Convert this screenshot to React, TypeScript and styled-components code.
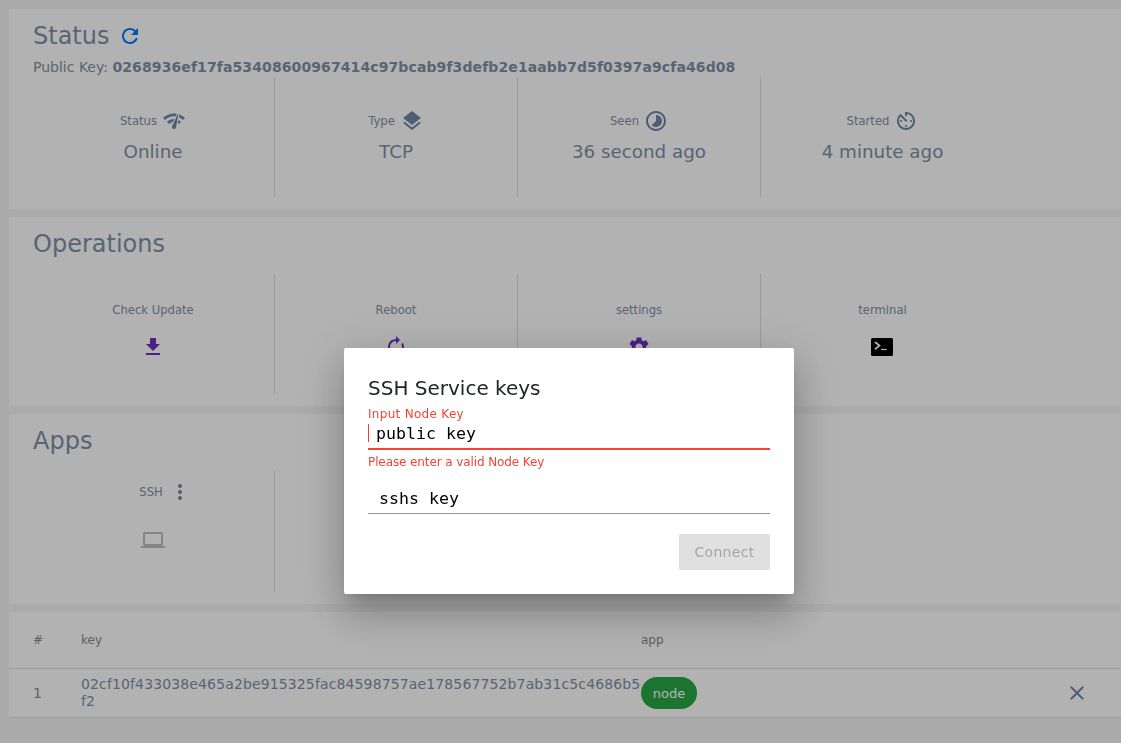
import React from 'react';
import styled, { createGlobalStyle } from 'styled-components';

const GlobalStyle = createGlobalStyle`
  html, body {
    margin: 0;
    padding: 0;
    height: 100%;
    overflow: hidden;
    background: #f5f5f5;
    font-family: "DejaVu Sans", sans-serif;
    color: #8090a6;
  }
  * {
    box-sizing: border-box;
  }
`;

const Page = styled.div`
  display: flex;
  flex-direction: column;
  gap: 8px;
  padding: 9px 0 0 9px;
`;
const Panel = styled.section`
  background: #fff;
  padding: 12px 0 12px 23px;
`;
const Title = styled.h2<{ $tight?: boolean }>`
  display: flex;
  align-items: center;
  gap: 9px;
  margin: 0 0 ${({ $tight }) => ($tight ? '8px' : '16px')} 1px;
  padding-top: 2px;
  height: 29px;
  font-size: 24px;
  line-height: 27px;
  font-weight: 400;
  svg {
    margin-top: -2px;
  }
`;
const KeyLine = styled.div`
  margin-left: 1px;
  height: 19px;
  font-size: 14px;
  line-height: 19px;
  b {
    font-weight: 700;
    letter-spacing: 0.1px;
  }
`;
const CellRow = styled.div`
  display: grid;
  grid-template-columns: repeat(4, 243px);
`;
const Cell = styled.div<{ $top: number; $gap: number; $height: number }>`
  display: flex;
  flex-direction: column;
  align-items: center;
  gap: ${({ $gap }) => $gap}px;
  height: ${({ $height }) => $height}px;
  padding-top: ${({ $top }) => $top}px;
  border-right: 1px solid #ddd;
  &:last-child {
    border-right: none;
  }
`;
const Label = styled.div`
  display: flex;
  align-items: center;
  gap: 5px;
  height: 20px;
  font-size: 11.6px;
  line-height: 20px;
`;
const Overhang = styled.span`
  margin-right: -25px;
`;
const Value = styled.div`
  font-size: 18.3px;
  line-height: 24px;
`;
const Icon = styled.svg<{ $color?: string }>`
  display: block;
  flex: none;
  fill: ${({ $color }) => $color || '#7088a8'};
`;
const TerminalIcon = styled.svg`
  display: block;
  margin: 3px 1px 0 0;
`;
const TablePanel = styled.section`
  background: #fff;
  color: #8090a6;
`;
const TableRow = styled.div<{ $height: number }>`
  display: grid;
  grid-template-columns: 48px 560px 1fr 24px;
  align-items: center;
  height: ${({ $height }) => $height}px;
  padding: 0 32px 0 24px;
  border-bottom: 1px solid #dee2e6;
  font-size: 14px;
  line-height: 17px;
`;
const HeadCell = styled.div`
  font-size: 12px;
  color: #8a8a8a;
`;
const KeyCell = styled.div`
  word-break: break-all;
  letter-spacing: 0.13px;
`;
const Chip = styled.span`
  display: inline-flex;
  align-items: center;
  justify-content: center;
  width: 56px;
  height: 32px;
  border-radius: 16px;
  background: #28a745;
  color: #fff;
  font-size: 13px;
`;
const Overlay = styled.div`
  position: fixed;
  inset: 0;
  background: rgba(0, 0, 0, 0.3);
`;
const Dialog = styled.div`
  position: absolute;
  left: 344px;
  top: 348px;
  width: 450px;
  padding: 24px;
  background: #fff;
  border-radius: 2px;
  color: #212529;
  box-shadow: 0 11px 15px -7px rgba(0, 0, 0, 0.2), 0 24px 38px 3px rgba(0, 0, 0, 0.14), 0 9px 46px 8px rgba(0, 0, 0, 0.12);
`;
const DialogTitle = styled.h3`
  margin: 0 0 2px;
  font-size: 20px;
  line-height: 32px;
  font-weight: 400;
`;
const FieldLabel = styled.div`
  font-size: 12px;
  line-height: 16px;
  letter-spacing: 0.3px;
  color: #f44336;
`;
const InputBox = styled.div<{ $error?: boolean }>`
  position: relative;
  display: flex;
  height: ${({ $error }) => ($error ? '28px' : '32px')};
  border-bottom: ${({ $error }) => ($error ? '2px solid #f44336' : '1px solid #949494')};
`;
const Caret = styled.span`
  position: absolute;
  left: 0;
  top: 2px;
  width: 1px;
  height: 18px;
  background: #f44336;
`;
const TextInput = styled.input<{ $indent: number; $top: number; $bottom: number }>`
  flex: 1;
  min-width: 0;
  padding: ${({ $top }) => $top}px 0 ${({ $bottom }) => $bottom}px ${({ $indent }) => $indent}px;
  border: none;
  outline: none;
  background: transparent;
  font-family: "DejaVu Sans Mono", monospace;
  font-size: 16.6px;
  color: #000;
  &::placeholder {
    color: #000;
    opacity: 1;
  }
`;
const ErrorText = styled.div`
  margin-top: 4px;
  margin-bottom: 12px;
  font-size: 12px;
  line-height: 16px;
  letter-spacing: -0.1px;
  color: #f44336;
`;
const Actions = styled.div`
  display: flex;
  justify-content: flex-end;
  margin-top: 20px;
`;
const ConnectButton = styled.button`
  width: 91px;
  height: 36px;
  border: none;
  border-radius: 2px;
  background: #e0e0e0;
  color: #a6a6a6;
  font-family: inherit;
  font-size: 14px;
  letter-spacing: 0.3px;
`;

const paths = {
  refresh: 'M17.65 6.35C16.2 4.9 14.21 4 12 4c-4.42 0-7.99 3.58-7.99 8s3.57 8 7.99 8c3.73 0 6.84-2.55 7.73-6h-2.08c-.82 2.33-3.04 4-5.65 4-3.31 0-6-2.69-6-6s2.69-6 6-6c1.66 0 3.14.69 4.22 1.78L13 11h7V4l-2.35 2.35z',
  network: 'M15.9 5c-.17 0-.32.09-.41.23l-.07.15-5.18 11.65c-.16.29-.26.61-.26.96 0 1.11.9 2.01 2.01 2.01.96 0 1.77-.68 1.96-1.59l.01-.03L16.4 5.5c0-.28-.22-.5-.5-.5zM1 9l2 2c2.88-2.88 6.79-4.08 10.53-3.62l1.19-2.68C9.89 3.84 4.74 5.27 1 9zm20 2l2-2c-1.64-1.64-3.55-2.82-5.59-3.57l-.53 2.82c1.5.62 2.9 1.53 4.12 2.75zm-4 4l2-2c-.8-.8-1.7-1.42-2.66-1.89l-.55 2.92c.42.27.83.59 1.21.97zM5 13l2 2c1.13-1.13 2.56-1.79 4.03-2l1.28-2.88c-2.63-.08-5.3.87-7.31 2.88z',
  layers: 'M11.99 18.54l-7.37-5.73L3 14.07l9 7 9-7-1.63-1.27-7.38 5.74zM12 16l7.36-5.73L21 9l-9-7-9 7 1.63 1.27L12 16z',
  timelapse: 'M16.24 7.76C15.07 6.59 13.54 6 12 6v6l-4.24 4.24c2.34 2.34 6.14 2.34 8.49 0 2.34-2.34 2.34-6.14-.01-8.48zM12 2C6.48 2 2 6.48 2 12s4.48 10 10 10 10-4.48 10-10S17.52 2 12 2zm0 18c-4.42 0-8-3.58-8-8s3.58-8 8-8 8 3.58 8 8-3.58 8-8 8z',
  timer: 'M11 17c0 .55.45 1 1 1s1-.45 1-1-.45-1-1-1-1 .45-1 1zm0-14v4h2V5.08c3.39.49 6 3.39 6 6.92 0 3.87-3.13 7-7 7s-7-3.13-7-7c0-1.68.59-3.22 1.58-4.42L12 13l1.41-1.41-6.8-6.8v.02C4.42 6.45 3 9.05 3 12c0 4.97 4.02 9 9 9 4.97 0 9-4.03 9-9s-4.03-9-9-9h-1zm7 9c0-.55-.45-1-1-1s-1 .45-1 1 .45 1 1 1 1-.45 1-1zM6 12c0 .55.45 1 1 1s1-.45 1-1-.45-1-1-1-1 .45-1 1z',
  download: 'M19 9h-4V3H9v6H5l7 7 7-7zM5 18v2h14v-2H5z',
  renew: 'M12 6v3l4-4-4-4v3c-4.42 0-8 3.58-8 8 0 1.57.46 3.03 1.24 4.26L6.7 14.8c-.45-.83-.7-1.79-.7-2.8 0-3.31 2.69-6 6-6zm6.76 1.74L17.3 9.2c.44.84.7 1.79.7 2.8 0 3.31-2.69 6-6 6v-3l-4 4 4 4v-3c4.42 0 8-3.58 8-8 0-1.57-.46-3.03-1.24-4.26z',
  settings: 'M19.14 12.94c.04-.3.06-.61.06-.94 0-.32-.02-.64-.07-.94l2.03-1.58c.18-.14.23-.41.12-.61l-1.92-3.32c-.12-.22-.37-.29-.59-.22l-2.39.96c-.5-.38-1.03-.7-1.62-.94l-.36-2.54c-.04-.24-.24-.41-.48-.41h-3.84c-.24 0-.43.17-.47.41l-.36 2.54c-.59.24-1.13.57-1.62.94l-2.39-.96c-.22-.08-.47 0-.59.22L2.74 8.87c-.12.21-.08.47.12.61l2.03 1.58c-.05.3-.09.63-.09.94s.02.64.07.94l-2.03 1.58c-.18.14-.23.41-.12.61l1.92 3.32c.12.22.37.29.59.22l2.39-.96c.5.38 1.03.7 1.62.94l.36 2.54c.05.24.24.41.48.41h3.84c.24 0 .44-.17.47-.41l.36-2.54c.59-.24 1.13-.56 1.62-.94l2.39.96c.22.08.47 0 .59-.22l1.92-3.32c.12-.22.07-.47-.12-.61l-2.01-1.58zM12 15.6c-1.98 0-3.6-1.62-3.6-3.6s1.62-3.6 3.6-3.6 3.6 1.62 3.6 3.6-1.62 3.6-3.6 3.6z',
  laptop: 'M20 18c1.1 0 1.99-.9 1.99-2L22 6c0-1.1-.9-2-2-2H4c-1.1 0-2 .9-2 2v10c0 1.1.9 2 2 2H0v2h24v-2h-4zM4 6h16v10H4V6z',
  more: 'M12 8c1.1 0 2-.9 2-2s-.9-2-2-2-2 .9-2 2 .9 2 2 2zm0 2c-1.1 0-2 .9-2 2s.9 2 2 2 2-.9 2-2-.9-2-2-2zm0 6c-1.1 0-2 .9-2 2s.9 2 2 2 2-.9 2-2-.9-2-2-2z',
  close: 'M19 6.41L17.59 5 12 10.59 6.41 5 5 6.41 10.59 12 5 17.59 6.41 19 12 13.41 17.59 19 19 17.59 13.41 12z',
};

const Glyph = ({ name, size = 24, color }: { name: keyof typeof paths; size?: number; color?: string }) => (
  <Icon $color={color} width={size} height={size} viewBox="0 0 24 24">
    <path d={paths[name]} />
  </Icon>
);

const TerminalGlyph = () => (
  <TerminalIcon width="22" height="18" viewBox="0 0 22 18">
    <rect width="22" height="18" rx="1.5" fill="#000" />
    <path d="M4 4l4.4 3.6L4 11.2" fill="none" stroke="#fff" strokeWidth="1.8" />
    <path d="M10 11.5h5.7" fill="none" stroke="#fff" strokeWidth="1.2" />
  </TerminalIcon>
);

const statusCells = [
  { label: 'Status', icon: 'network', value: 'Online' },
  { label: 'Type', icon: 'layers', value: 'TCP' },
  { label: 'Seen', icon: 'timelapse', value: '36 second ago' },
  { label: 'Started', icon: 'timer', value: '4 minute ago' },
] as const;

const purple = '#6a32c0';

const App = () => (
  <>
    <GlobalStyle />
    <Page>
      <Panel>
        <Title $tight>
          Status
          <Glyph name="refresh" color="#007bff" />
        </Title>
        <KeyLine>
          Public Key: <b>0268936ef17fa53408600967414c97bcab9f3defb2e1aabb7d5f0397a9cfa46d08</b>
        </KeyLine>
        <CellRow>
          {statusCells.map((cell) => (
            <Cell key={cell.label} $top={34} $gap={9} $height={120}>
              <Label>
                {cell.label}
                <Glyph name={cell.icon} />
              </Label>
              <Value>{cell.value}</Value>
            </Cell>
          ))}
        </CellRow>
      </Panel>
      <Panel>
        <Title>Operations</Title>
        <CellRow>
          <Cell $top={26} $gap={15} $height={120}>
            <Label>Check Update</Label>
            <Glyph name="download" color={purple} />
          </Cell>
          <Cell $top={26} $gap={15} $height={120}>
            <Label>Reboot</Label>
            <Glyph name="renew" color={purple} />
          </Cell>
          <Cell $top={26} $gap={15} $height={120}>
            <Label>settings</Label>
            <Glyph name="settings" color={purple} />
          </Cell>
          <Cell $top={26} $gap={15} $height={120}>
            <Label>terminal</Label>
            <TerminalGlyph />
          </Cell>
        </CellRow>
      </Panel>
      <Panel>
        <Title>Apps</Title>
        <CellRow>
          <Cell $top={11} $gap={26} $height={121}>
            <Label>
              SSH
              <Overhang>
                <Glyph name="more" />
              </Overhang>
            </Label>
            <Glyph name="laptop" color="#bdbdbd" />
          </Cell>
          <Cell $top={11} $gap={26} $height={121} />
        </CellRow>
      </Panel>
      <TablePanel>
        <TableRow $height={57}>
          <HeadCell>#</HeadCell>
          <HeadCell>key</HeadCell>
          <HeadCell>app</HeadCell>
        </TableRow>
        <TableRow $height={49}>
          <div>1</div>
          <KeyCell>02cf10f433038e465a2be915325fac84598757ae178567752b7ab31c5c4686b5f2</KeyCell>
          <div>
            <Chip>node</Chip>
          </div>
          <Glyph name="close" color="#7088a8" />
        </TableRow>
      </TablePanel>
    </Page>
    <Overlay>
      <Dialog>
        <DialogTitle>SSH Service keys</DialogTitle>
        <FieldLabel>Input Node Key</FieldLabel>
        <InputBox $error>
          <Caret />
          <TextInput $indent={8} $top={0} $bottom={3} placeholder="public key" readOnly />
        </InputBox>
        <ErrorText>Please enter a valid Node Key</ErrorText>
        <InputBox>
          <TextInput $indent={11} $top={2} $bottom={0} placeholder="sshs key" readOnly />
        </InputBox>
        <Actions>
          <ConnectButton disabled>Connect</ConnectButton>
        </Actions>
      </Dialog>
    </Overlay>
  </>
);

export default App;
